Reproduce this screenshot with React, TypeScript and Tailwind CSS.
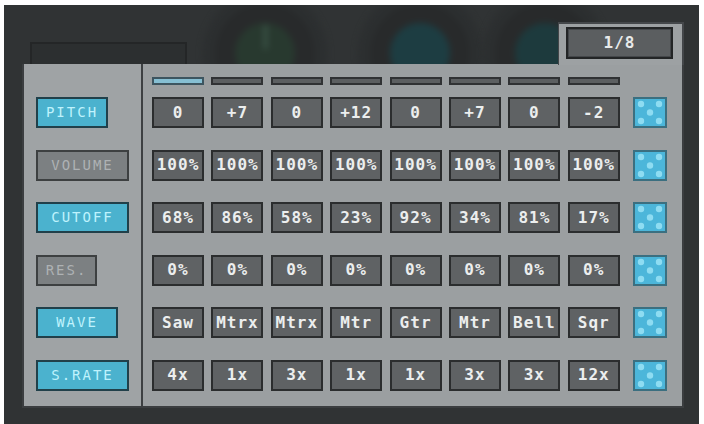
import React from "react";

type Row = { label: string; active: boolean; width: string; values: string[] };

const rows: Row[] = [
  { label: "PITCH", active: true, width: "w-[72px]", values: ["0", "+7", "0", "+12", "0", "+7", "0", "-2"] },
  { label: "VOLUME", active: false, width: "w-[93px]", values: ["100%", "100%", "100%", "100%", "100%", "100%", "100%", "100%"] },
  { label: "CUTOFF", active: true, width: "w-[93px]", values: ["68%", "86%", "58%", "23%", "92%", "34%", "81%", "17%"] },
  { label: "RES.", active: false, width: "w-[61px]", values: ["0%", "0%", "0%", "0%", "0%", "0%", "0%", "0%"] },
  { label: "WAVE", active: true, width: "w-[82px]", values: ["Saw", "Mtrx", "Mtrx", "Mtr", "Gtr", "Mtr", "Bell", "Sqr"] },
  { label: "S.RATE", active: true, width: "w-[93px]", values: ["4x", "1x", "3x", "1x", "1x", "3x", "3x", "12x"] },
];

const mono = "font-['DejaVu_Sans_Mono','Liberation_Mono',monospace]";

// randomize button, a little cyan die
const Dice = () => (
  <div className="w-[34px] h-[31px] border-2 border-[#3b6f80] bg-[#4cb6da]">
    <svg viewBox="0 0 30 27" className="w-full h-full">
      {[
        [6, 5],
        [24, 5],
        [15, 13.5],
        [6, 22],
        [24, 22],
      ].map(([cx, cy], i) => (
        <circle key={i} cx={cx} cy={cy} r="3.2" fill="#9fe6f7" opacity="0.8" />
      ))}
    </svg>
  </div>
);

const Label: React.FC<{ row: Row }> = ({ row }) => (
  <div
    className={`${row.width} h-[31px] flex items-center justify-center border-2 text-[14px] tracking-[2px] ${mono} ${
      row.active
        ? "bg-[#4bb2ce] border-[#21404a] text-[#bff2fd]"
        : "bg-[#7c8082] border-[#3d4041] text-[#aeb2b4]"
    }`}
  >
    {row.label}
  </div>
);

const Knob: React.FC<{ x: string; fill: string; tick?: boolean }> = ({ x, fill, tick }) => (
  <div className={`absolute top-[-14px] ${x} w-[124px] h-[124px] rounded-full bg-[#2c2f30] flex items-center justify-center blur-[3px]`}>
    <div className="w-[100px] h-[100px] rounded-full bg-[#282a2b] flex items-center justify-center">
      <div className={`w-[60px] h-[60px] rounded-full ${fill} flex justify-center`}>
        {tick && <div className="w-[3px] h-[24px] bg-[#3f5a4e] mt-[2px]" />}
      </div>
    </div>
  </div>
);

export default function App() {
  return (
    <div className="w-[704px] h-[424px] bg-white pt-[5px] pl-[4px] pr-[5px]">
      <div className="relative h-full bg-[#303334] overflow-hidden">
        {/* blurry hardware behind the panel */}
        <div className="absolute left-[26px] top-[37px] w-[157px] h-[40px] border-2 border-[#242627] bg-[#2c2f30]" />
        <Knob x="left-[199px]" fill="bg-[#28392f]" tick />
        <Knob x="left-[354px]" fill="bg-[#1d3d42]" />
        <Knob x="left-[479px]" fill="bg-[#1d3a3d]" />

        <div className="relative ml-[18px] mt-[17px] w-[662px]">
          {/* pattern tab */}
          <div className="flex justify-end">
            <div className="w-[126px] h-[43px] -mb-[1px] bg-[#9da1a3] border-t-2 border-r-2 border-l border-[#44474a] pt-[3px] pl-[7px]">
              <div className="w-[107px] h-[32px] border-2 border-[#232526] bg-[#5b5e60] shadow-[inset_0_0_0_1px_#44474a] flex items-center justify-center">
                <span className={`text-[16px] font-bold tracking-[1px] text-[#e8eaea] ${mono}`}>1/8</span>
              </div>
            </div>
          </div>

          {/* main panel */}
          <div className="h-[344px] flex bg-[#9b9fa1] border-l-2 border-r-2 border-b-2 border-[#3b3e40]">
            <div className="w-[119px] border-r-2 border-[#3d4042] bg-[#9fa3a5] pl-[12px] pt-[33px] flex flex-col gap-[21.6px]">
              {rows.map((r) => (
                <Label key={r.label} row={r} />
              ))}
            </div>

            <div className="flex-1 pl-[9px] pt-[13px]">
              <div className="flex gap-[7.4px] mb-[12px]">
                {Array.from({ length: 8 }).map((_, i) => (
                  <div
                    key={i}
                    className={`w-[52px] h-[8px] border-2 ${
                      i === 0 ? "bg-[#86bfd3] border-[#3d5560]" : "bg-[#5c5f61] border-[#303234]"
                    }`}
                  />
                ))}
              </div>

              <div className="flex flex-col gap-[21.6px]">
                {rows.map((r) => (
                  <div key={r.label} className="flex items-center">
                    <div className="flex gap-[7.4px]">
                      {r.values.map((v, i) => (
                        <div
                          key={i}
                          className={`w-[52px] h-[31px] border-2 border-[#2b2d2e] bg-[#5f6264] flex items-center justify-center text-[16px] font-bold tracking-[1px] text-[#eceeee] ${mono}`}
                        >
                          {v}
                        </div>
                      ))}
                    </div>
                    <div className="ml-[13px]">
                      <Dice />
                    </div>
                  </div>
                ))}
              </div>
            </div>
          </div>
        </div>
      </div>
    </div>
  );
}
